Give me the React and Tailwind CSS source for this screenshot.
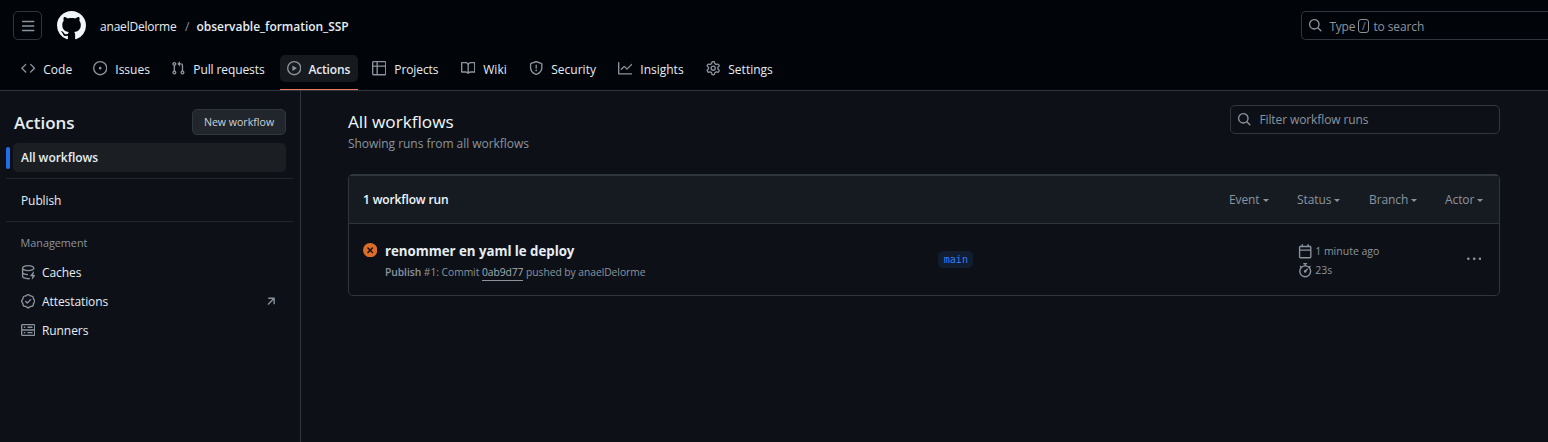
const PATHS = {
  bars: 'M1 2.75A.75.75 0 0 1 1.75 2h12.5a.75.75 0 0 1 0 1.5H1.75A.75.75 0 0 1 1 2.75Zm0 5A.75.75 0 0 1 1.75 7h12.5a.75.75 0 0 1 0 1.5H1.75A.75.75 0 0 1 1 7.75ZM1.75 12h12.5a.75.75 0 0 1 0 1.5H1.75a.75.75 0 0 1 0-1.5Z',
  github: 'M8 0c4.42 0 8 3.58 8 8a8.013 8.013 0 0 1-5.45 7.59c-.4.08-.55-.17-.55-.38 0-.27.01-1.13.01-2.2 0-.75-.25-1.23-.54-1.48 1.78-.2 3.65-.88 3.65-3.95 0-.88-.31-1.59-.82-2.15.08-.2.36-1.02-.08-2.12 0 0-.67-.22-2.2.82-.64-.18-1.32-.27-2-.27-.68 0-1.36.09-2 .27-1.53-1.03-2.2-.82-2.2-.82-.44 1.1-.16 1.92-.08 2.12-.51.56-.82 1.28-.82 2.15 0 3.06 1.86 3.75 3.64 3.95-.23.2-.44.55-.51 1.07-.46.21-1.61.55-2.33-.66-.15-.24-.6-.83-1.23-.82-.67.01-.27.38.01.53.34.19.73.9.82 1.13.16.45.68 1.31 2.69.94 0 .67.01 1.3.01 1.49 0 .21-.15.45-.55.38A7.995 7.995 0 0 1 0 8c0-4.42 3.58-8 8-8Z',
  code: 'm11.28 3.22 4.25 4.25a.75.75 0 0 1 0 1.06l-4.25 4.25a.749.749 0 0 1-1.275-.326.749.749 0 0 1 .215-.734L13.94 8l-3.72-3.72a.749.749 0 0 1 .326-1.275.749.749 0 0 1 .734.215Zm-6.56 0a.751.751 0 0 1 1.042.018.751.751 0 0 1 .018 1.042L2.06 8l3.72 3.72a.749.749 0 0 1-.326 1.275.749.749 0 0 1-.734-.215L.47 8.53a.75.75 0 0 1 0-1.06Z',
  issue: 'M8 9.5a1.5 1.5 0 1 0 0-3 1.5 1.5 0 0 0 0 3ZM8 0a8 8 0 1 1 0 16A8 8 0 0 1 8 0ZM1.5 8a6.5 6.5 0 1 0 13 0 6.5 6.5 0 0 0-13 0Z',
  pull: 'M1.5 3.25a2.25 2.25 0 1 1 3 2.122v5.256a2.251 2.251 0 1 1-1.5 0V5.372A2.25 2.25 0 0 1 1.5 3.25Zm5.677-.177L9.573.677A.25.25 0 0 1 10 .854V2.5h1A2.5 2.5 0 0 1 13.5 5v5.628a2.251 2.251 0 1 1-1.5 0V5a1 1 0 0 0-1-1h-1v1.646a.25.25 0 0 1-.427.177L7.177 3.427a.25.25 0 0 1 0-.354ZM3.75 2.5a.75.75 0 1 0 0 1.5.75.75 0 0 0 0-1.5Zm0 9.5a.75.75 0 1 0 0 1.5.75.75 0 0 0 0-1.5Zm8.25.75a.75.75 0 1 0 1.5 0 .75.75 0 0 0-1.5 0Z',
  play: 'M8 0a8 8 0 1 1 0 16A8 8 0 0 1 8 0ZM1.5 8a6.5 6.5 0 1 0 13 0 6.5 6.5 0 0 0-13 0Zm4.879-2.773 4.264 2.559a.25.25 0 0 1 0 .428l-4.264 2.559A.25.25 0 0 1 6 10.559V5.442a.25.25 0 0 1 .379-.215Z',
  table: 'M0 1.75C0 .784.784 0 1.75 0h12.5C15.216 0 16 .784 16 1.75v12.5A1.75 1.75 0 0 1 14.25 16H1.75A1.75 1.75 0 0 1 0 14.25ZM6.5 6.5v8h7.75a.25.25 0 0 0 .25-.25V6.5Zm8-1.5V1.75a.25.25 0 0 0-.25-.25H6.5V5Zm-13 1.5v7.75c0 .138.112.25.25.25H5v-8ZM5 5V1.5H1.75a.25.25 0 0 0-.25.25V5Z',
  book: 'M0 1.75A.75.75 0 0 1 .75 1h4.253c1.227 0 2.317.59 3 1.501A3.743 3.743 0 0 1 11.006 1h4.245a.75.75 0 0 1 .75.75v10.5a.75.75 0 0 1-.75.75h-4.507a2.25 2.25 0 0 0-1.591.659l-.622.621a.75.75 0 0 1-1.06 0l-.622-.621A2.25 2.25 0 0 0 5.258 13H.75a.75.75 0 0 1-.75-.75Zm7.251 10.324.004-5.073-.002-2.253A2.25 2.25 0 0 0 5.003 2.5H1.5v9h3.757a3.75 3.75 0 0 1 1.994.574ZM8.755 4.75l-.004 7.322a3.752 3.752 0 0 1 1.992-.572H14.5v-9h-3.495a2.25 2.25 0 0 0-2.25 2.25Z',
  shield: 'M7.467.133a1.748 1.748 0 0 1 1.066 0l5.25 1.68A1.75 1.75 0 0 1 15 3.48V7c0 1.566-.32 3.182-1.303 4.682-.983 1.498-2.585 2.813-5.032 3.855a1.697 1.697 0 0 1-1.33 0c-2.447-1.042-4.049-2.357-5.032-3.855C1.32 10.182 1 8.566 1 7V3.48a1.75 1.75 0 0 1 1.217-1.667Zm.61 1.429a.25.25 0 0 0-.153 0l-5.25 1.68a.25.25 0 0 0-.174.238V7c0 1.358.275 2.666 1.057 3.86.784 1.194 2.121 2.34 4.366 3.297a.196.196 0 0 0 .154 0c2.245-.956 3.582-2.104 4.366-3.298C13.225 9.666 13.5 8.36 13.5 7V3.48a.251.251 0 0 0-.174-.237l-5.25-1.68ZM8.75 4.75v3a.75.75 0 0 1-1.5 0v-3a.75.75 0 0 1 1.5 0ZM9 10.5a1 1 0 1 1-2 0 1 1 0 0 1 2 0Z',
  graph: 'M1.5 1.75V13.5h13.75a.75.75 0 0 1 0 1.5H.75a.75.75 0 0 1-.75-.75V1.75a.75.75 0 0 1 1.5 0Zm14.28 2.53-5.25 5.25a.75.75 0 0 1-1.06 0L7 7.06 4.28 9.78a.751.751 0 0 1-1.042-.018.751.751 0 0 1-.018-1.042l3.25-3.25a.75.75 0 0 1 1.06 0L10 7.94l4.72-4.72a.751.751 0 0 1 1.042.018.751.751 0 0 1 .018 1.042Z',
  gear: 'M8 0a8.2 8.2 0 0 1 .701.031C9.444.095 9.99.645 10.16 1.29l.288 1.107c.018.066.079.158.212.224.231.114.454.243.668.386.123.082.233.09.299.071l1.103-.303c.644-.176 1.392.021 1.82.63.27.385.506.792.704 1.218.315.675.111 1.422-.364 1.891l-.814.806c-.049.048-.098.147-.088.294.016.257.016.515 0 .772-.01.147.038.246.088.294l.814.806c.475.469.679 1.216.364 1.891a7.977 7.977 0 0 1-.704 1.217c-.428.61-1.176.807-1.82.63l-1.102-.302c-.067-.019-.177-.011-.3.071a5.909 5.909 0 0 1-.668.386c-.133.066-.194.158-.211.224l-.29 1.106c-.168.646-.715 1.196-1.458 1.26a8.006 8.006 0 0 1-1.402 0c-.743-.064-1.289-.614-1.458-1.26l-.289-1.106c-.018-.066-.079-.158-.212-.224a5.738 5.738 0 0 1-.668-.386c-.123-.082-.233-.09-.299-.071l-1.103.303c-.644.176-1.392-.021-1.82-.63a8.12 8.12 0 0 1-.704-1.218c-.315-.675-.111-1.422.363-1.891l.815-.806c.05-.048.098-.147.088-.294a6.214 6.214 0 0 1 0-.772c.01-.147-.038-.246-.088-.294l-.815-.806C.635 6.045.431 5.298.746 4.623a7.92 7.92 0 0 1 .704-1.217c.428-.61 1.176-.807 1.82-.63l1.102.302c.067.019.177.011.3-.071.214-.143.437-.272.668-.386.133-.066.194-.158.211-.224l.29-1.106C6.009.645 6.556.095 7.299.03 7.53.01 7.764 0 8 0Zm-.571 1.525c-.036.003-.108.036-.137.146l-.289 1.105c-.147.561-.549.967-.998 1.189-.173.086-.34.183-.5.29-.417.278-.97.423-1.529.27l-1.103-.303c-.109-.03-.175.016-.195.045-.22.312-.412.644-.573.99-.014.031-.021.11.059.19l.815.806c.411.406.562.957.53 1.456a4.709 4.709 0 0 0 0 .582c.032.499-.119 1.05-.53 1.456l-.815.806c-.081.08-.073.159-.059.19.162.346.353.677.573.989.02.03.085.076.195.046l1.102-.303c.56-.153 1.113-.008 1.53.27.161.107.328.204.501.29.447.222.85.629.997 1.189l.289 1.105c.029.109.101.143.137.146a6.6 6.6 0 0 0 1.142 0c.036-.003.108-.036.137-.146l.289-1.105c.147-.561.549-.967.998-1.189.173-.086.34-.183.5-.29.417-.278.97-.423 1.529-.27l1.103.303c.109.029.175-.016.195-.045.22-.313.411-.644.573-.99.014-.031.021-.11-.059-.19l-.815-.806c-.411-.406-.562-.957-.53-1.456a4.709 4.709 0 0 0 0-.582c-.032-.499.119-1.05.53-1.456l.815-.806c.081-.08.073-.159.059-.19a6.464 6.464 0 0 0-.573-.989c-.02-.03-.085-.076-.195-.046l-1.102.303c-.56.153-1.113.008-1.53-.27a4.44 4.44 0 0 0-.501-.29c-.447-.222-.85-.629-.997-1.189l-.289-1.105c-.029-.11-.101-.143-.137-.146a6.6 6.6 0 0 0-1.142 0ZM11 8a3 3 0 1 1-6 0 3 3 0 0 1 6 0ZM9.5 8a1.5 1.5 0 1 0-3.001.001A1.5 1.5 0 0 0 9.5 8Z',
  search: 'M10.68 11.74a6 6 0 0 1-7.922-8.982 6 6 0 0 1 8.982 7.922l3.04 3.04a.749.749 0 0 1-.326 1.275.749.749 0 0 1-.734-.215ZM11.5 7a4.499 4.499 0 1 0-8.997 0A4.499 4.499 0 0 0 11.5 7Z',
  cache: 'M2.5 5.724V8c0 .248.238.7 1.169 1.159.874.43 2.144.745 3.62.822a.75.75 0 1 1-.078 1.498c-1.622-.085-3.102-.432-4.204-.975a5.565 5.565 0 0 1-.507-.28V12.5c0 .133.058.318.282.551.227.237.591.483 1.101.707 1.015.447 2.47.742 4.117.742.406 0 .802-.018 1.183-.052a.751.751 0 1 1 .134 1.494C8.89 15.98 8.45 16 8 16c-1.805 0-3.475-.32-4.721-.869-.623-.274-1.173-.619-1.579-1.041-.408-.425-.7-.964-.7-1.59v-9c0-.626.292-1.165.7-1.591.406-.42.956-.766 1.579-1.04C4.525.32 6.195 0 8 0c1.806 0 3.476.32 4.721.869.623.274 1.173.619 1.579 1.041.408.425.7.964.7 1.59 0 .626-.292 1.165-.7 1.591-.406.42-.956.766-1.578 1.04C11.475 6.68 9.805 7 8 7c-1.805 0-3.475-.32-4.721-.869a6.15 6.15 0 0 1-.779-.407Zm0-2.224c0 .133.058.318.282.551.227.237.591.483 1.101.707C4.898 5.205 6.353 5.5 8 5.5c1.646 0 3.101-.295 4.118-.742.508-.224.873-.471 1.1-.708.224-.232.282-.417.282-.55 0-.133-.058-.318-.282-.551-.227-.237-.591-.483-1.101-.707C11.102 1.795 9.647 1.5 8 1.5c-1.646 0-3.101.295-4.118.742-.508.224-.873.471-1.1.708-.224.232-.282.417-.282.55ZM14.49 7.582a.375.375 0 0 0-.66-.313l-3.625 4.625a.375.375 0 0 0 .295.606h2.127l-.619 2.922a.375.375 0 0 0 .666.304l3.125-4.125A.375.375 0 0 0 15.5 11h-1.778l.769-3.418Z',
  verified: 'm9.585.52.929.68c.153.112.331.186.518.215l1.138.175a2.678 2.678 0 0 1 2.24 2.24l.174 1.139c.029.187.103.365.215.518l.68.928a2.677 2.677 0 0 1 0 3.17l-.68.928a1.174 1.174 0 0 0-.215.518l-.175 1.138a2.678 2.678 0 0 1-2.241 2.241l-1.138.175a1.17 1.17 0 0 0-.518.215l-.928.68a2.677 2.677 0 0 1-3.17 0l-.928-.68a1.174 1.174 0 0 0-.518-.215L3.83 14.41a2.678 2.678 0 0 1-2.24-2.24l-.175-1.138a1.17 1.17 0 0 0-.215-.518l-.68-.928a2.677 2.677 0 0 1 0-3.17l.68-.928c.112-.153.186-.331.215-.518l.175-1.14a2.678 2.678 0 0 1 2.24-2.24l1.139-.175c.187-.029.365-.103.518-.215l.928-.68a2.677 2.677 0 0 1 3.17 0ZM7.303 1.728l-.927.68a2.67 2.67 0 0 1-1.18.489l-1.137.174a1.179 1.179 0 0 0-.987.987l-.174 1.136a2.677 2.677 0 0 1-.489 1.18l-.68.928a1.18 1.18 0 0 0 0 1.394l.68.927c.256.348.424.753.489 1.18l.174 1.137c.078.509.478.909.987.987l1.136.174a2.67 2.67 0 0 1 1.18.489l.928.68c.414.305.979.305 1.394 0l.927-.68a2.67 2.67 0 0 1 1.18-.489l1.137-.174a1.18 1.18 0 0 0 .987-.987l.174-1.136a2.67 2.67 0 0 1 .489-1.18l.68-.928a1.176 1.176 0 0 0 0-1.394l-.68-.927a2.686 2.686 0 0 1-.489-1.18l-.174-1.137a1.179 1.179 0 0 0-.987-.987l-1.136-.174a2.677 2.677 0 0 1-1.18-.489l-.928-.68a1.176 1.176 0 0 0-1.394 0ZM11.28 6.78l-3.75 3.75a.75.75 0 0 1-1.06 0L4.72 8.78a.751.751 0 0 1 .018-1.042.751.751 0 0 1 1.042-.018L7 8.94l3.22-3.22a.751.751 0 0 1 1.042.018.751.751 0 0 1 .018 1.042Z',
  server: 'M1.75 1h12.5c.966 0 1.75.784 1.75 1.75v4c0 .372-.116.717-.314 1 .198.283.314.628.314 1v4a1.75 1.75 0 0 1-1.75 1.75H1.75A1.75 1.75 0 0 1 0 12.75v-4c0-.358.109-.707.314-1a1.739 1.739 0 0 1-.314-1v-4C0 1.784.784 1 1.75 1ZM1.5 2.75v4c0 .138.112.25.25.25h12.5a.25.25 0 0 0 .25-.25v-4a.25.25 0 0 0-.25-.25H1.75a.25.25 0 0 0-.25.25Zm.25 5.75a.25.25 0 0 0-.25.25v4c0 .138.112.25.25.25h12.5a.25.25 0 0 0 .25-.25v-4a.25.25 0 0 0-.25-.25ZM7 4.75A.75.75 0 0 1 7.75 4h4.5a.75.75 0 0 1 0 1.5h-4.5A.75.75 0 0 1 7 4.75ZM7.75 10h4.5a.75.75 0 0 1 0 1.5h-4.5a.75.75 0 0 1 0-1.5ZM3 4.75A.75.75 0 0 1 3.75 4h.5a.75.75 0 0 1 0 1.5h-.5A.75.75 0 0 1 3 4.75ZM3.75 10h.5a.75.75 0 0 1 0 1.5h-.5a.75.75 0 0 1 0-1.5Z',
  upRight: 'M4.53 4.75A.75.75 0 0 1 5.28 4h6.01a.75.75 0 0 1 .75.75v6.01a.75.75 0 0 1-1.5 0v-4.2l-5.26 5.261a.749.749 0 0 1-1.275-.326.749.749 0 0 1 .215-.734L9.48 5.5h-4.2a.75.75 0 0 1-.75-.75Z',
  calendar: 'M4.75 0a.75.75 0 0 1 .75.75V2h5V.75a.75.75 0 0 1 1.5 0V2h1.25c.966 0 1.75.784 1.75 1.75v10.5A1.75 1.75 0 0 1 13.25 16H2.75A1.75 1.75 0 0 1 1 14.25V3.75C1 2.784 1.784 2 2.75 2H4V.75A.75.75 0 0 1 4.75 0ZM2.5 7.5v6.75c0 .138.112.25.25.25h10.5a.25.25 0 0 0 .25-.25V7.5Zm10.75-4H2.75a.25.25 0 0 0-.25.25V6h11V3.75a.25.25 0 0 0-.25-.25Z',
  stopwatch: 'M5.75.75A.75.75 0 0 1 6.5 0h3a.75.75 0 0 1 0 1.5h-.75v1l-.001.041a6.724 6.724 0 0 1 3.464 1.435l.007-.006.75-.75a.749.749 0 0 1 1.275.326.749.749 0 0 1-.215.734l-.75.75-.006.007a6.75 6.75 0 1 1-10.548 0L2.72 5.03l-.75-.75a.751.751 0 0 1 .018-1.042.751.751 0 0 1 1.042-.018l.75.75.007.006A6.72 6.72 0 0 1 7.25 2.541V1.5H6.5a.75.75 0 0 1-.75-.75ZM8 14.5a5.25 5.25 0 1 0-.001-10.501A5.25 5.25 0 0 0 8 14.5Zm.389-6.7 1.33-1.33a.75.75 0 1 1 1.061 1.06L9.45 8.861A1.503 1.503 0 0 1 8 10.75a1.499 1.499 0 1 1 .389-2.95Z',
  kebab: 'M8 9a1.5 1.5 0 1 0 0-3 1.5 1.5 0 0 0 0 3ZM1.5 9a1.5 1.5 0 1 0 0-3 1.5 1.5 0 0 0 0 3Zm13 0a1.5 1.5 0 1 0 0-3 1.5 1.5 0 0 0 0 3Z',
  failed: 'M2.343 13.657A8 8 0 1 1 13.658 2.343 8 8 0 0 1 2.343 13.657ZM6.03 4.97a.751.751 0 0 0-1.042.018.751.751 0 0 0-.018 1.042L6.94 8 4.97 9.97a.749.749 0 0 0 .326 1.275.749.749 0 0 0 .734-.215L8 9.06l1.97 1.97a.749.749 0 0 0 1.275-.326.749.749 0 0 0-.215-.734L9.06 8l1.97-1.97a.749.749 0 0 0-.326-1.275.749.749 0 0 0-.734.215L8 6.94Z',
};

function Icon({ name, className = 'size-[14.4px] text-[#8b949e]' }) {
  return (
    <svg viewBox="0 0 16 16" fill="currentColor" aria-hidden="true" className={`shrink-0 ${className}`}>
      <path d={PATHS[name]} />
    </svg>
  );
}

const TABS = [
  { icon: 'code', label: 'Code', width: 'w-[65px]' },
  { icon: 'issue', label: 'Issues', width: 'w-[71px]' },
  { icon: 'pull', label: 'Pull requests', width: 'w-[109px]', tracking: 'tracking-[-0.1px]' },
  { icon: 'play', label: 'Actions', width: 'w-[78px]', active: true },
  { icon: 'table', label: 'Projects', width: 'w-[82px]', tracking: 'tracking-[-0.1px]' },
  { icon: 'book', label: 'Wiki', width: 'w-[61px]' },
  { icon: 'shield', label: 'Security', width: 'w-[82px]' },
  { icon: 'graph', label: 'Insights', width: 'w-[81px]' },
  { icon: 'gear', label: 'Settings', width: 'w-[82px]' },
];

function Tab({ icon, label, width, active, tracking = '' }) {
  return (
    <li className={`flex h-[35px] shrink-0 flex-col justify-between ${width}`}>
      <a
        className={`flex h-[27px] items-center rounded-[5px] px-[7px] whitespace-nowrap ${
          active ? 'bg-[#16191e] font-semibold tracking-[-0.15px]' : tracking
        }`}
      >
        <Icon name={icon} />
        <span className={`pt-[2px] ${active ? 'ml-[7px]' : 'ml-[7.9px]'}`}>{label}</span>
      </a>
      {active && <span className="h-px w-full bg-[#e8775c]" />}
    </li>
  );
}

function Header() {
  return (
    <header className="h-[91px] border-b border-[#30363d] bg-[#010409]">
      <div className="flex h-[55px] items-start pt-[11px] pl-[13px]">
        <button className="flex size-[29px] items-center justify-center rounded-[5px] border border-[#30363d] pt-px pl-px">
          <Icon name="bars" />
        </button>
        <Icon name="github" className="ml-[15px] size-[29px] text-[#f0f6fc]" />
        <div className="ml-[14px] flex h-[30px] items-center pt-[2px]">
          <span className="w-[85px] tracking-[-0.2px] whitespace-nowrap">anaelDelorme</span>
          <span className="w-[11.5px] text-[#8b949e]">/</span>
          <span className="font-semibold tracking-[-0.03px]">observable_formation_SSP</span>
        </div>
        <div className="ml-auto flex h-[29px] w-[247px] items-center rounded-l-[5px] border border-r-0 border-[#30363d] pl-[6px] text-[#8b949e]">
          <Icon name="search" />
          <span className="ml-[7px] w-[29px] pt-[2px] tracking-[-0.2px]">Type</span>
          <kbd className="mt-px flex h-[14px] w-[11px] items-center justify-center rounded-[3px] border border-[#8b949e] font-[Open_Sans,sans-serif] text-[10px]">
            /
          </kbd>
          <span className="ml-[4px] pt-[2px] tracking-[-0.1px]">to search</span>
        </div>
      </div>
      <ul className="flex gap-[7px] pl-[14px]">
        {TABS.map((tab) => (
          <Tab key={tab.label} {...tab} />
        ))}
      </ul>
    </header>
  );
}

function ManagementLink({ icon, label, external }) {
  return (
    <a className="flex h-[29px] items-center gap-[7px] pr-2 pl-[8.6px]">
      <Icon name={icon} />
      <span className="tracking-[-0.08px]">{label}</span>
      {external && <Icon name="upRight" className="ml-auto size-[14.4px] text-[#8b949e]" />}
    </a>
  );
}

function Sidebar() {
  return (
    <aside className="w-[301px] shrink-0 border-r border-[#30363d] pl-[6px]">
      <div className="flex items-center justify-between pt-[18px] pr-[14px] pl-[8px]">
        <h2 className="pt-[2px] text-[17px] font-semibold">Actions</h2>
        <button className="h-[26px] w-[94px] rounded-[5px] border border-[#30363d] bg-[#21262d] text-[10.6px] font-medium text-[#c9d1d9]">
          New workflow
        </button>
      </div>
      <div className="mt-2 flex items-center gap-[3px]">
        <span className="h-[22px] w-1 rounded-[3px] bg-[#1f6feb]" />
        <a className="flex h-[29px] w-[273px] items-center rounded-[5px] bg-[#1b1f23] pl-[8px] font-semibold tracking-[-0.03px]">
          All workflows
        </a>
      </div>
      <div className="mt-[6px] mr-[7px] flex h-[44px] items-center border-y border-[#21262d] pt-[2px] pl-[15px] tracking-[-0.1px]">
        Publish
      </div>
      <h3 className="mt-[12px] h-[17px] pl-[14.6px] text-[10.8px] leading-[17px] text-[#8b949e]">Management</h3>
      <div className="mt-[7px] mr-[14px] pl-[6px]">
        <ManagementLink icon="cache" label="Caches" />
        <ManagementLink icon="verified" label="Attestations" external />
        <ManagementLink icon="server" label="Runners" />
      </div>
    </aside>
  );
}

function Filter({ label, width }) {
  return (
    <button className={`flex shrink-0 items-center gap-[3px] tracking-[-0.1px] ${width}`}>
      {label}
      <span className="mt-px border-x-[3px] border-t-[3px] border-x-transparent border-t-[#8b949e]" />
    </button>
  );
}

function RunRow() {
  return (
    <div className="flex h-[71px] pl-[14px]">
      <Icon name="failed" className="mt-[19px] size-[14.4px] text-[#db6d28]" />
      <div className="ml-[7.6px] w-[553.4px] pt-[17px]">
        <h4 className="text-[13.3px] leading-5 font-bold tracking-[-0.04px]">renommer en yaml le deploy</h4>
        <p className="mt-[3px] text-[10.3px] leading-4 tracking-[-0.05px] whitespace-nowrap text-[#8b949e]">
          <span className="font-semibold">Publish</span> #1: Commit{' '}
          <span className="border-b border-[#8b949e] pb-px text-[#a5adb6]">0ab9d77</span> pushed by anaelDelorme
        </p>
      </div>
      <span className="mt-[27px] flex h-[17px] w-[35px] items-center justify-center rounded-[5px] bg-[#121d2f] font-[DejaVu_Sans_Mono,monospace] text-[10px] text-[#2f81f7]">
        main
      </span>
      <div className="ml-[325px] w-[168.6px] pt-[18px] text-[10.5px] text-[#8b949e]">
        <div className="flex h-[19px] items-center gap-[2.4px]">
          <Icon name="calendar" />
          <span className="pb-px">1 minute ago</span>
        </div>
        <div className="flex h-[19px] items-center gap-[2.4px]">
          <Icon name="stopwatch" />
          <span className="pb-px">23s</span>
        </div>
      </div>
      <Icon name="kebab" className="mt-[28px] size-[14.4px] text-[#8b949e]" />
    </div>
  );
}

function Main() {
  return (
    <main className="w-[1199px] pt-[14px] pl-[47px]">
      <div className="flex items-start justify-between">
        <div className="pt-[3px]">
          <h1 className="text-[17.2px] leading-7 text-[#f0f6fc]">All workflows</h1>
          <p className="leading-4 tracking-[-0.04px] text-[#8b949e]">Showing runs from all workflows</p>
        </div>
        <div className="flex h-[29px] w-[270px] items-center gap-[8px] rounded-[5px] border border-[#30363d] pl-[6px] text-[#8b949e]">
          <Icon name="search" />
          <span className="tracking-[-0.1px]">Filter workflow runs</span>
        </div>
      </div>
      <section className="mt-[22px] h-[122px] rounded-[5px] border border-t-2 border-[#30363d]">
        <div className="flex h-[48px] items-center border-b border-[#30363d] bg-[#161b22] pl-[14px]">
          <h2 className="mr-auto font-semibold tracking-[-0.15px] text-[#f0f6fc]">1 workflow run</h2>
          <div className="flex text-[#8b949e]">
            <Filter label="Event" width="w-[68px]" />
            <Filter label="Status" width="w-[72px]" />
            <Filter label="Branch" width="w-[76px]" />
            <Filter label="Actor" width="w-[54px]" />
          </div>
        </div>
        <RunRow />
      </section>
    </main>
  );
}

export default function App() {
  return (
    <div className="flex h-[442px] w-[1548px] flex-col overflow-hidden bg-[#0d1117] font-[Open_Sans,sans-serif] text-[12px] leading-[18px] text-[#e6edf3]">
      <Header />
      <div className="flex flex-1">
        <Sidebar />
        <Main />
      </div>
    </div>
  );
}
